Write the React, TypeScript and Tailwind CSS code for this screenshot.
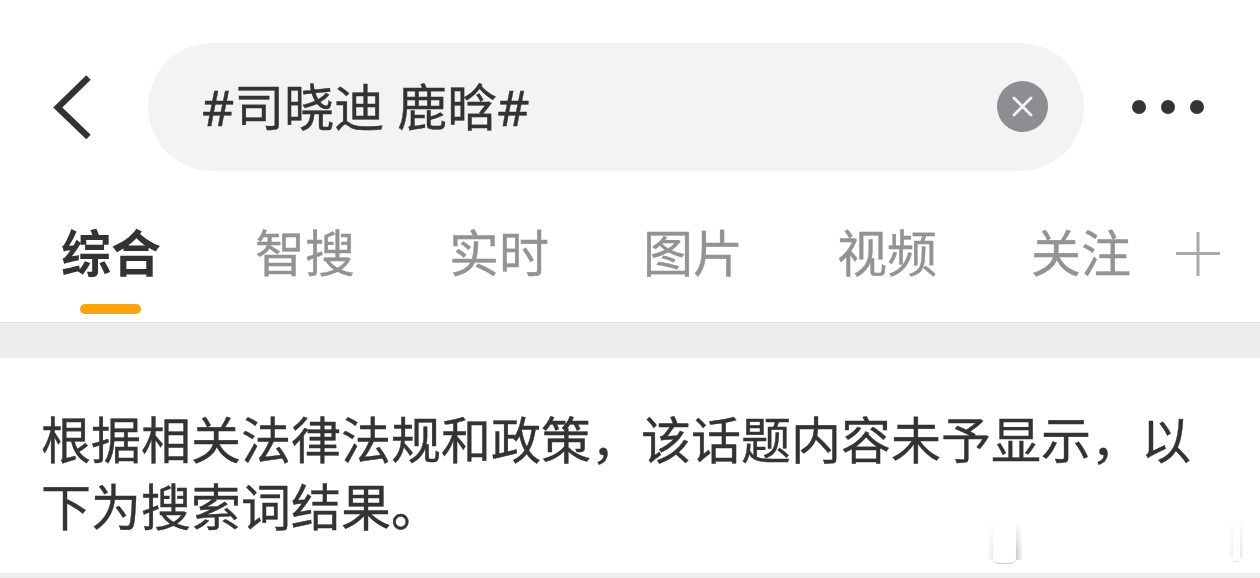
import { useState } from "react";

const tabs = ["综合", "智搜", "实时", "图片", "视频", "关注"];

export default function App() {
  const [active, setActive] = useState("综合");
  const [query, setQuery] = useState("#司晓迪 鹿晗#");

  return (
    <div className="h-[578px] w-[1260px] overflow-hidden bg-white font-['Noto_Sans_CJK_SC',sans-serif] text-[#333]">
      <header className="flex h-[210px] items-start pt-[43px]">
        <button className="ml-[53px] mt-[31px] h-[66px] w-[38px]" aria-label="返回">
          <svg width="38" height="66" viewBox="0 0 38 66" fill="none">
            <path d="M35.5 3.5L4.8 33.5L35.5 63" stroke="#333" strokeWidth="6.4" />
          </svg>
        </button>
        <div className="ml-[57px] flex h-32 w-[936px] items-center justify-between rounded-full bg-[#f3f3f3] pb-0.5 pl-[54px] pr-9">
          <p className="mt-0.5 whitespace-pre font-['Noto_Sans','Noto_Sans_CJK_SC',sans-serif] text-[50px] leading-[72px] [-webkit-text-stroke:0.4px_#333]">
            {query}
          </p>
          <button
            className="flex h-[51px] w-[51px] items-center justify-center rounded-full bg-[#8e8e92]"
            aria-label="清除"
            onClick={() => setQuery("")}
          >
            <svg width="21" height="21" viewBox="0 0 21 21" fill="none">
              <path d="M2 2L19 19M19 2L2 19" stroke="#f3f3f3" strokeWidth="2.8" strokeLinecap="round" />
            </svg>
          </button>
        </div>
        <button className="ml-12 mt-[57px] flex gap-[15px]" aria-label="更多">
          <span className="h-3.5 w-3.5 rounded-full bg-[#333]" />
          <span className="h-3.5 w-3.5 rounded-full bg-[#333]" />
          <span className="h-3.5 w-3.5 rounded-full bg-[#333]" />
        </button>
      </header>

      <nav className="flex h-28 pl-[61px]">
        {tabs.map((tab) => (
          <button
            key={tab}
            onClick={() => setActive(tab)}
            className={`flex w-[194px] shrink-0 flex-col items-start text-[50px] leading-[80px] last-of-type:w-[100px] ${
              tab === active ? "font-bold" : "text-[#939393] [-webkit-text-stroke:0.4px_#939393]"
            }`}
          >
            <span>{tab}</span>
            {tab === active && <span className="ml-[19px] mt-3.5 h-2.5 w-[61px] rounded-full bg-[#faa50f]" />}
          </button>
        ))}
        <svg className="ml-11 mt-[21px] shrink-0" width="46" height="46" viewBox="0 0 46 46" fill="none">
          <path d="M23 1V45M1 22.5H45" stroke="#aaa" strokeWidth="3" />
        </svg>
      </nav>

      <div className="h-9 border-t border-[#e4e4e4] bg-[#ededed]" />

      <section className="relative h-[215px] pl-[41px] pt-[46px]">
        <p className="text-[50px] leading-[66.5px] [-webkit-text-stroke:0.4px_#333]">
          根据相关法律法规和政策，该话题内容未予显示，以
          <br />
          下为搜索词结果。
        </p>
        {/* faint shadow traces in the corner */}
        <div className="absolute left-[987px] top-[162px] flex h-11">
          <span className="mb-1 w-1.5 bg-linear-to-l from-black/8 to-transparent mask-t-from-20%" />
          <span className="w-[23px] rounded-b-[6px] border-b border-black/20" />
          <span className="mb-1 w-[7px] bg-linear-to-r from-black/20 to-transparent mask-t-from-20%" />
        </div>
        <div className="absolute left-[1229px] top-[162px] flex h-[42px]">
          <span className="mb-1 w-1 bg-linear-to-l from-black/7 to-transparent mask-t-from-20%" />
          <span className="w-[7px] rounded-b-[3px] border-b border-black/15" />
          <span className="mb-1 w-1 bg-linear-to-r from-black/10 to-transparent mask-t-from-20%" />
        </div>
      </section>
      <div className="h-[5px] bg-[#ededed]" />
    </div>
  );
}
